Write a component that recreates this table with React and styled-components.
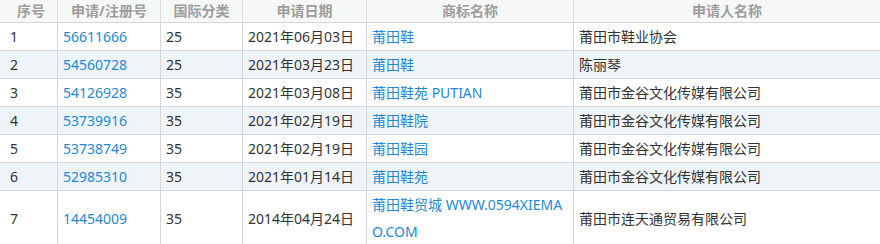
import styled, { createGlobalStyle } from "styled-components";

const GlobalStyle = createGlobalStyle`
  html, body {
    margin: 0;
    padding: 0;
    background: #fff;
  }
  body {
    font-family: "Noto Sans", "Noto Sans CJK SC", sans-serif;
    font-size: 14px;
    color: #333;
  }
`;

const Table = styled.div`
  display: grid;
  grid-template-columns: 58px 103px 82px 124px 207px 1fr;
  width: 880px;
`;

const HeadCell = styled.div`
  box-sizing: border-box;
  height: 23px;
  line-height: 22px;
  padding: 0 5px 0 ${({ $first }) => ($first ? "10px" : "5px")};
  background: #f6f7f7;
  color: #9d9d9d;
  font-weight: bold;
  text-align: center;
  border-bottom: 1px solid #d6d6d6;
  border-right: ${({ $last }) => ($last ? "none" : "1px solid #dcdcdc")};
  white-space: nowrap;
`;

const Cell = styled.div`
  box-sizing: border-box;
  display: flex;
  align-items: center;
  min-height: 28px;
  line-height: 27px;
  padding: 0 4px 0 ${({ $first }) => ($first ? "10px" : "5px")};
  background: ${({ $striped }) => ($striped ? "#eff4f8" : "#fff")};
  border-bottom: 1px solid #d6d6d6;
  border-right: ${({ $last }) => ($last ? "none" : "1px solid #d6d6d6")};
  color: ${({ $link }) => ($link ? "#2589d0" : "#333")};
  word-break: break-all;
`;

const headers = ["序号", "申请/注册号", "国际分类", "申请日期", "商标名称", "申请人名称"];

const rows = [
  ["1", "56611666", "25", "2021年06月03日", "莆田鞋", "莆田市鞋业协会"],
  ["2", "54560728", "25", "2021年03月23日", "莆田鞋", "陈丽琴"],
  ["3", "54126928", "35", "2021年03月08日", "莆田鞋苑 PUTIAN", "莆田市金谷文化传媒有限公司"],
  ["4", "53739916", "35", "2021年02月19日", "莆田鞋院", "莆田市金谷文化传媒有限公司"],
  ["5", "53738749", "35", "2021年02月19日", "莆田鞋园", "莆田市金谷文化传媒有限公司"],
  ["6", "52985310", "35", "2021年01月14日", "莆田鞋苑", "莆田市金谷文化传媒有限公司"],
  ["7", "14454009", "35", "2014年04月24日", "莆田鞋贸城 WWW.0594XIEMAO.COM", "莆田市连天通贸易有限公司"],
];

const linkCols = [1, 4];

export default function App() {
  return (
    <>
      <GlobalStyle />
      <Table>
        {headers.map((h, i) => (
          <HeadCell key={h} $first={i === 0} $last={i === headers.length - 1}>
            {h}
          </HeadCell>
        ))}
        {rows.map((row, r) =>
          row.map((value, c) => (
            <Cell
              key={`${r}-${c}`}
              $first={c === 0}
              $last={c === row.length - 1}
              $striped={r % 2 === 1}
              $link={linkCols.includes(c)}
            >
              {value}
            </Cell>
          ))
        )}
      </Table>
    </>
  );
}
